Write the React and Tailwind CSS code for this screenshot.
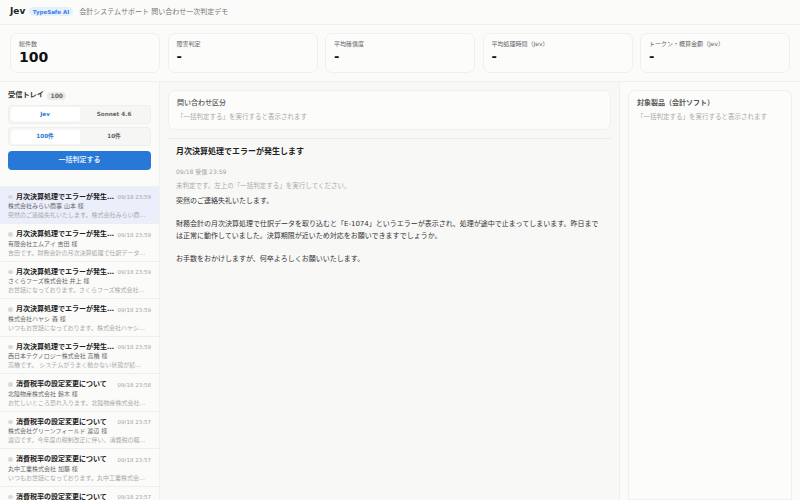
const mails = [
  { subject: '月次決算処理でエラーが発生します', time: '09/18 23:59', from: '株式会社みらい商事 山本 様', body: '突然のご連絡失礼いたします。株式会社みらい商事の山本です。', active: true },
  { subject: '月次決算処理でエラーが発生します', time: '09/18 23:59', from: '有限会社エムアイ 吉田 様', body: '吉田です。財務会計の月次決算処理で仕訳データを取り込むと' },
  { subject: '月次決算処理でエラーが発生します', time: '09/18 23:59', from: 'さくらフーズ株式会社 井上 様', body: 'お世話になっております。さくらフーズ株式会社の井上です。' },
  { subject: '月次決算処理でエラーが発生します', time: '09/18 23:59', from: '株式会社ハヤシ 森 様', body: 'いつもお世話になっております。株式会社ハヤシの森です。' },
  { subject: '月次決算処理でエラーが発生します', time: '09/18 23:59', from: '西日本テクノロジー株式会社 高橋 様', body: '高橋です。 システムがうまく動かない状態が続いております。' },
  { subject: '消費税率の設定変更について', time: '09/18 23:58', from: '北陸物産株式会社 鈴木 様', body: 'お忙しいところ恐れ入ります。北陸物産株式会社の鈴木です。' },
  { subject: '消費税率の設定変更について', time: '09/18 23:57', from: '株式会社グリーンフィールド 渡辺 様', body: '渡辺です。今年度の税制改正に伴い、消費税の軽減税率の設定を' },
  { subject: '消費税率の設定変更について', time: '09/18 23:57', from: '丸中工業株式会社 加藤 様', body: 'いつもお世話になっております。丸中工業株式会社の加藤です。' },
  { subject: '消費税率の設定変更について', time: '09/18 23:57', from: '東都商事株式会社 小林 様', body: 'お世話になっております。東都商事株式会社の小林です。' },
];

const stats = [
  { label: '総件数', value: '100', big: true },
  { label: '障害判定', value: '-' },
  { label: '平均確信度', value: '-' },
  { label: '平均処理時間（Jev）', value: '-' },
  { label: 'トークン・概算金額（Jev）', value: '-' },
];

const Toggle = ({ left, right }) => (
  <div className="flex h-[19px] rounded-[4px] border border-[#eeeeec] bg-[#f6f6f4] p-[1.5px] text-[5.7px] font-semibold">
    <div className="flex flex-1 items-center justify-center rounded-[3px] bg-white text-[#2f7ad6]">{left}</div>
    <div className="flex flex-1 items-center justify-center text-[#666666]">{right}</div>
  </div>
);

const MailRow = ({ mail }) => (
  <div className={`h-[37.5px] shrink-0 border-b border-[#eeeeec] pl-2 pr-[8px] pt-[6.5px] ${mail.active ? 'bg-[#ebeefb]' : ''}`}>
    <div className="flex h-[8px] items-center">
      <span className="mr-[3.5px] h-[4.5px] w-[4.5px] shrink-0 rounded-full bg-[#d9d9d6]" />
      <span className="min-w-0 flex-1 truncate text-[7px] leading-[9px] font-bold text-[#222222]">{mail.subject}</span>
      <span className="ml-[3px] shrink-0 text-[5.5px] leading-[8px] text-[#a3a3a0]">{mail.time}</span>
    </div>
    <div className="truncate text-[6px] leading-[9px] text-[#666666]">{mail.from}</div>
    <div className="truncate pr-[5px] text-[6px] leading-[9px] text-[#aaaaa7]">{mail.body}</div>
  </div>
);

export default function App() {
  return (
    <div className="flex h-[500px] w-[800px] flex-col overflow-hidden bg-[#fbfbfa] font-['DejaVu_Sans','Noto_Sans_CJK_JP',sans-serif] text-[#222222]">
      {/* Header */}
      <header className="flex h-[24.5px] shrink-0 items-center border-b border-[#f0f0ee] pl-[10px]">
        <span className="text-[9px] font-bold text-[#222222]">Jev</span>
        <span className="ml-[3.5px] rounded-full bg-[#e6effc] px-[4px] py-[1.5px] text-[5.5px] leading-[6px] font-bold text-[#3b82e0]">TypeSafe AI</span>
        <span className="ml-[6px] text-[7px] text-[#777777]">会計システムサポート 問い合わせ一次判定デモ</span>
      </header>

      {/* Stats */}
      <div className="grid h-[57px] shrink-0 grid-cols-5 gap-[7.5px] border-b border-[#f0f0ee] px-[10px] py-[8px]">
        {stats.map((s) => (
          <div key={s.label} className="rounded-[7px] border border-[#f0f0ee] bg-[#fcfcfb] pl-[8px] pt-[6px]">
            <div className="text-[6px] leading-[8px] text-[#666666]">{s.label}</div>
            <div className={`mt-[2px] font-bold leading-[14px] text-[#111111] ${s.big ? 'text-[14px]' : 'text-[13px]'}`}>{s.value}</div>
          </div>
        ))}
      </div>

      <div className="flex min-h-0 flex-1">
        {/* Inbox */}
        <aside className="flex w-[160px] shrink-0 flex-col border-r border-[#f0f0ee] bg-[#fbfbfa]">
          <div className="flex flex-col gap-[3.5px] px-[8px] pt-[8.5px]">
            <div className="flex h-[11px] items-center gap-[3px]">
              <span className="text-[7.2px] font-semibold text-[#333333]">受信トレイ</span>
              <span className="rounded-full bg-[#ebeae7] px-[3.5px] text-[6px] leading-[8px] font-semibold text-[#666666]">100</span>
            </div>
            <Toggle left="Jev" right="Sonnet 4.6" />
            <Toggle left="100件" right="10件" />
            <button className="mt-[1px] flex h-[19px] items-center justify-center rounded-[4px] bg-[#2878d8] text-[7px] font-semibold text-[#dfeafa]">一括判定する</button>
          </div>
          <div className="mt-[16px] flex min-h-0 flex-1 flex-col overflow-hidden border-t border-[#f0f0ee]">
            {mails.map((m, i) => (
              <MailRow key={i} mail={m} />
            ))}
          </div>
        </aside>

        {/* Detail */}
        <main className="flex min-w-0 flex-1 flex-col bg-[#f8f8f7] pl-[8px] pr-[8px] pt-[8.5px]">
          <div className="h-[40px] shrink-0 rounded-[7px] border border-[#f0f0ee] bg-[#fcfcfb] pl-[8px] pt-[7px]">
            <div className="text-[7px] leading-[11px] font-medium text-[#555555]">問い合わせ区分</div>
            <div className="mt-[3px] text-[6.5px] leading-[10px] text-[#aaaaa7]">「一括判定する」を実行すると表示されます</div>
          </div>
          <div className="mt-[8px] border-t border-[#ecece9] px-[8px] pt-[5.5px]">
            <h1 className="text-[8px] leading-[14px] font-bold text-[#222222]">月次決算処理でエラーが発生します</h1>
            <div className="mt-[8.5px] text-[6px] leading-[10px] text-[#a3a3a0]">09/18 受信 23:59</div>
            <div className="mt-[3.5px] text-[6.5px] leading-[10px] text-[#aaaaa7]">未判定です。左上の「一括判定する」を実行してください。</div>
            <div className="mt-[5px] text-[7px] leading-[11.7px] text-[#333333]">
              <p>突然のご連絡失礼いたします。</p>
              <p className="mt-[11.7px]">財務会計の月次決算処理で仕訳データを取り込むと「E-1074」というエラーが表示され、処理が途中で止まってしまいます。昨日までは正常に動作していました。決算期限が近いため対応をお願いできますでしょうか。</p>
              <p className="mt-[11.7px]">お手数をおかけしますが、何卒よろしくお願いいたします。</p>
            </div>
          </div>
        </main>

        {/* Product */}
        <aside className="flex w-[181px] shrink-0 flex-col border-l border-[#f0f0ee] pl-[8px] pr-[8px] pt-[8.5px]">
          <div className="flex-1 rounded-t-[7px] border border-[#f0f0ee] bg-[#fcfcfb] pl-[8px] pt-[7px]">
            <div className="text-[7px] leading-[11px] font-semibold text-[#555555]">対象製品（会計ソフト）</div>
            <div className="mt-[3px] text-[6.5px] leading-[10px] text-[#aaaaa7]">「一括判定する」を実行すると表示されます</div>
          </div>
        </aside>
      </div>
    </div>
  );
}
